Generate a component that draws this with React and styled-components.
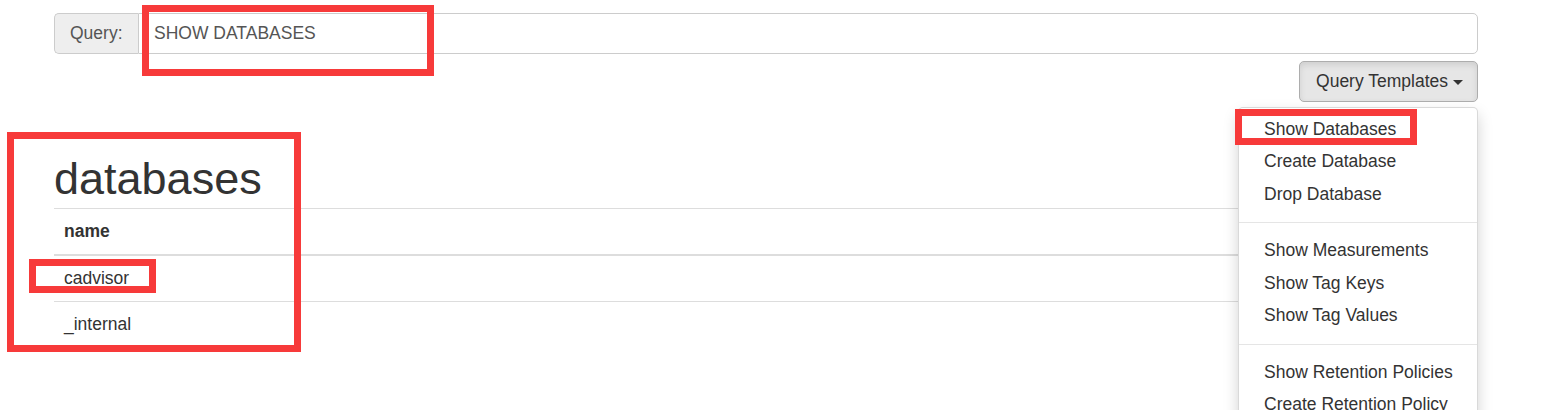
import React from "react";
import styled, { createGlobalStyle } from "styled-components";

const Global = createGlobalStyle`
  html, body { margin: 0; padding: 0; background: #fff; }
  body {
    font-family: "Liberation Sans", Arial, sans-serif;
    font-size: 17.5px;
    color: #333;
  }
  * { box-sizing: border-box; }
`;

const Page = styled.div`
  position: relative;
  width: 1542px;
  height: 410px;
  overflow: hidden;
  padding: 13px 64px 0 54px;
`;

const InputGroup = styled.div`
  display: flex;
  height: 41px;
`;

const Addon = styled.span`
  display: flex;
  align-items: center;
  padding: 0 15px;
  background: #eee;
  border: 1px solid #ccc;
  border-right: 0;
  border-radius: 5px 0 0 5px;
  color: #555;
  font-size: 17.5px;
  width: 84px;
`;

const QueryInput = styled.input`
  flex: 1;
  height: 41px;
  border: 1px solid #ccc;
  border-radius: 0 5px 5px 0;
  padding: 0 15px;
  font-family: "Liberation Sans", Arial, sans-serif;
  font-size: 17.5px;
  color: #555;
  outline: none;
  background: #fff;
`;

const ButtonRow = styled.div`
  position: relative;
  display: flex;
  justify-content: flex-end;
  margin-top: 7px;
`;

const TemplatesButton = styled.button`
  display: flex;
  align-items: center;
  height: 41px;
  padding: 0 14px 0 16px;
  background: #e6e6e6;
  border: 1px solid #adadad;
  border-radius: 5px;
  box-shadow: inset 0 3px 6px rgba(0, 0, 0, 0.1);
  font-family: "Liberation Sans", Arial, sans-serif;
  font-size: 17.5px;
  color: #333;
`;

const Caret = styled.span`
  display: inline-block;
  width: 0;
  height: 0;
  margin-left: 5px;
  margin-top: 1px;
  border-top: 5px solid #333;
  border-left: 5px solid transparent;
  border-right: 5px solid transparent;
`;

const Menu = styled.ul`
  position: absolute;
  top: 46px;
  right: 0;
  width: 240px;
  margin: 0;
  padding: 5px 0;
  list-style: none;
  background: #fff;
  border: 1px solid rgba(0, 0, 0, 0.15);
  border-radius: 5px;
  box-shadow: 0 7px 15px rgba(0, 0, 0, 0.175);
  z-index: 5;
`;

const MenuItem = styled.li`
  height: 32.5px;
  line-height: 25px;
  padding: 3.75px 25px;
  white-space: nowrap;
  color: #333;
  font-size: 17.5px;
`;

const Divider = styled.li`
  height: 1px;
  margin: 11.5px 0;
  background: #e5e5e5;
`;

const Heading = styled.h1`
  margin: 52px 0 4px;
  font-size: 45px;
  font-weight: 500;
  line-height: 50px;
  color: #333;
`;

const Table = styled.table`
  width: 100%;
  border-collapse: collapse;
  border-top: 1px solid #ddd;
`;

const Th = styled.th`
  text-align: left;
  height: 46px;
  padding: 0 10px;
  font-weight: bold;
  border-bottom: 2px solid #ddd;
`;

const Td = styled.td`
  height: ${(p) => (p.$last ? 46 : 47)}px;
  padding: 0 10px;
  border-bottom: ${(p) => (p.$last ? "0" : "1px solid #ddd")};
`;

const Mark = styled.div`
  position: absolute;
  border: 7px solid #f73a3a;
  pointer-events: none;
  z-index: 10;
`;

const marks = [
  { left: 142, top: 5, width: 292, height: 71 },
  { left: 1235, top: 109, width: 182, height: 36 },
  { left: 7, top: 132, width: 294, height: 220 },
  { left: 29, top: 259, width: 127, height: 34 },
];

export default function App() {
  return (
    <Page>
      <Global />
      <InputGroup>
        <Addon>Query:</Addon>
        <QueryInput readOnly value="SHOW DATABASES" />
      </InputGroup>
      <ButtonRow>
        <TemplatesButton>
          Query Templates
          <Caret />
        </TemplatesButton>
        <Menu>
          <MenuItem>Show Databases</MenuItem>
          <MenuItem>Create Database</MenuItem>
          <MenuItem>Drop Database</MenuItem>
          <Divider />
          <MenuItem>Show Measurements</MenuItem>
          <MenuItem>Show Tag Keys</MenuItem>
          <MenuItem>Show Tag Values</MenuItem>
          <Divider />
          <MenuItem>Show Retention Policies</MenuItem>
          <MenuItem>Create Retention Policy</MenuItem>
        </Menu>
      </ButtonRow>
      <Heading>databases</Heading>
      <Table>
        <thead>
          <tr>
            <Th>name</Th>
          </tr>
        </thead>
        <tbody>
          <tr>
            <Td>cadvisor</Td>
          </tr>
          <tr>
            <Td $last>_internal</Td>
          </tr>
        </tbody>
      </Table>
      {marks.map((m, i) => (
        <Mark key={i} style={m} />
      ))}
    </Page>
  );
}
